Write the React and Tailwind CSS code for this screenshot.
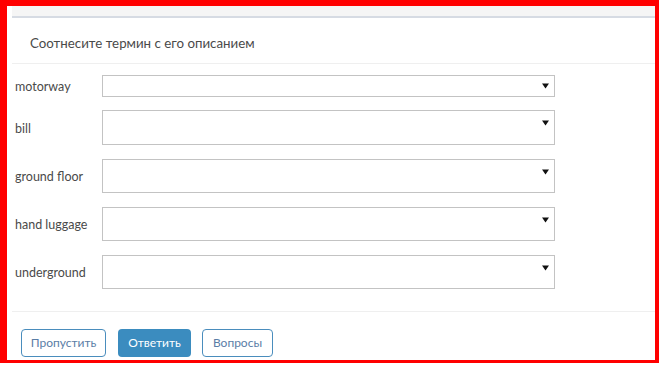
import React from 'react';

const rows = [
  { term: 'motorway', h: 'h-[22px]', gap: 'mt-0', arrow: 'items-center' },
  { term: 'bill', h: 'h-[35px]', gap: 'mt-[13px]', arrow: 'items-start pt-[9px]' },
  { term: 'ground floor', h: 'h-[34px]', gap: 'mt-[14px]', arrow: 'items-start pt-[9px]' },
  { term: 'hand luggage', h: 'h-[34px]', gap: 'mt-[14px]', arrow: 'items-start pt-[9px]' },
  { term: 'underground', h: 'h-[34px]', gap: 'mt-[14px]', arrow: 'items-start pt-[9px]' },
];

function Caret() {
  return (
    <svg width="7" height="6" viewBox="0 0 7 6" className="shrink-0">
      <path d="M0 0.5h7L3.5 5.5z" fill="#111" />
    </svg>
  );
}

function MatchRow({ row }) {
  return (
    <div className={`flex items-center ${row.gap}`}>
      <div className="w-[87px] shrink-0 text-[12.5px] leading-[18px] pt-[2px] text-[#4a4a4a]">{row.term}</div>
      <div className={`w-[453px] ${row.h} border border-[#c3c3c3] bg-white flex justify-end pr-[5px] ${row.arrow}`}>
        <Caret />
      </div>
    </div>
  );
}

export default function App() {
  return (
    <div className="w-[666px] h-[369px] bg-white" style={{ fontFamily: 'Lato, "Open Sans", sans-serif' }}>
      <div className="w-[659px] h-[363px] border-t-[6px] border-l-[7px] border-r-[4px] border-b-[3px] border-[#ff0000] pl-[5px] flex flex-col">
        <div className="h-[10px] bg-[#f5f5f5]" />
        <div className="h-[2px] bg-[#d6dbe3]" />
        <div className="h-[46px] border-b border-[#efefef] pl-[18px] pt-[15px]">
          <h2 className="text-[13.3px] leading-[20px] text-[#4a4a4a]">Соотнесите термин с его описанием</h2>
        </div>
        <div className="pl-[3px] pt-[11px] pb-[22px] border-b border-[#efefef]">
          {rows.map(r => <MatchRow key={r.term} row={r} />)}
        </div>
        <div className="flex items-center gap-[12px] pl-[9px] pt-[17px]">
          <button className="w-[85px] h-[28px] rounded-[4px] border border-[#4a8dbd] text-[12px] text-[#5a7da6] bg-white">Пропустить</button>
          <button className="w-[73px] h-[28px] rounded-[4px] bg-[#3b8cbf] text-[12px] text-white">Ответить</button>
          <button className="w-[71px] h-[28px] rounded-[4px] border border-[#4a8dbd] text-[12px] text-[#5a7da6] bg-white -ml-px">Вопросы</button>
        </div>
      </div>
    </div>
  );
}
